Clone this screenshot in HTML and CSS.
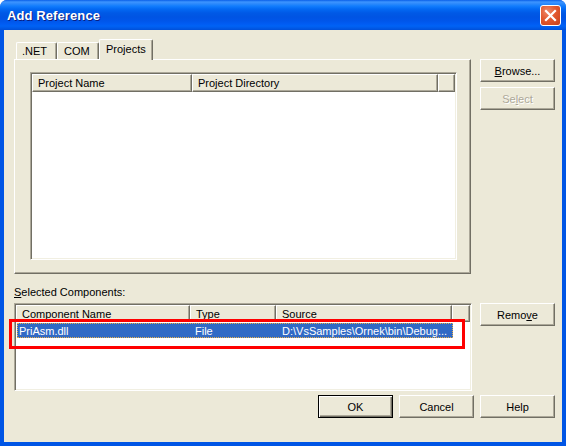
FILE: index.html
```html
<!DOCTYPE html>
<html>
<head>
<meta charset="utf-8">
<link rel="stylesheet" href="styles.css">
</head>
<body>
<div class="window">
  <div class="titlebar">
    <span class="title">Add Reference</span>
    <span class="close"><svg width="13" height="13" viewBox="0 0 13 13"><path d="M2 2 L11 11 M11 2 L2 11" stroke="#fff" stroke-width="2.2" stroke-linecap="square"/></svg></span>
  </div>
  <div class="client">
    <div class="toprow">
      <div class="tabarea">
        <div class="tabs">
          <div class="tab t-net">.NET</div>
          <div class="tab t-com">COM</div>
          <div class="tab t-proj active">Projects</div>
        </div>
        <div class="panel">
          <div class="listview big">
            <div class="header">
              <div class="hcell w-pname">Project Name</div>
              <div class="hcell w-pdir">Project Directory</div>
              <div class="hcell w-pfill"></div>
            </div>
          </div>
        </div>
      </div>
      <div class="sidebtns top">
        <button class="btn"><u>B</u>rowse...</button>
        <button class="btn disabled">Se<u>l</u>ect</button>
      </div>
    </div>
    <div class="label"><u>S</u>elected Components:</div>
    <div class="midrow">
      <div class="listview small">
        <div class="header">
          <div class="hcell w-cname">Component Name</div>
          <div class="hcell w-type">Type</div>
          <div class="hcell w-src">Source</div>
          <div class="hcell w-sfill"></div>
        </div>
        <div class="row selected">
          <div class="cell c-name">PriAsm.dll</div>
          <div class="cell c-type">File</div>
          <div class="cell c-src">D:\VsSamples\Ornek\bin\Debug...</div>
        </div>
      </div>
      <div class="sidebtns">
        <button class="btn">Remo<u>v</u>e</button>
      </div>
    </div>
    <div class="bottomrow">
      <button class="btn default">OK</button>
      <button class="btn">Cancel</button>
      <button class="btn">Help</button>
    </div>
    <div class="annotation"></div>
  </div>
</div>
</body>
</html>
```

FILE: styles.css
```css
html, body {
  margin: 0;
  padding: 0;
  background: #ffffff;
}

body {
  font-family: "Liberation Sans", Arial, sans-serif;
  font-size: 11px;
  color: #000;
}

.window {
  width: 566px;
  height: 446px;
  box-sizing: border-box;
  display: flex;
  flex-direction: column;
  border-radius: 7px 7px 0 0;
  overflow: hidden;
  background: #0055e5;
}

.titlebar {
  height: 30px;
  flex: none;
  display: flex;
  align-items: center;
  justify-content: space-between;
  padding: 0 5px 0 7px;
  background: linear-gradient(to bottom,
    #0a5fe8 0px, #3d95ff 2px, #2a88fb 4px, #127dfd 6px, #0369f3 9px,
    #0059e6 13px, #0054e3 17px, #0056ea 21px, #005cf3 24px,
    #0063f5 26px, #005ae9 28px, #004fd8 30px);
}

.title {
  color: #fff;
  font-family: "Liberation Sans", Arial, sans-serif;
  font-weight: bold;
  font-size: 13px;
  text-shadow: 1px 1px 0 #0a1e80;
  letter-spacing: 0.1px;
}

.close {
  width: 21px;
  height: 21px;
  box-sizing: border-box;
  border: 1px solid #fff;
  border-radius: 3px;
  background: radial-gradient(circle at 35% 30%, #ef8a6a 0%, #e2592f 45%, #c8401a 100%);
  display: flex;
  align-items: center;
  justify-content: center;
  margin-top: 1px;
}

.client {
  position: relative;
  flex: 1;
  margin: 0 4px 4px 4px;
  background: #ece9d8;
  padding: 9px 7px 0 10px;
  display: flex;
  flex-direction: column;
  border-left: 0;
}

.toprow {
  display: flex;
  gap: 9px;
}

.tabarea {
  width: 457px;
  display: flex;
  flex-direction: column;
}

.tabs {
  height: 20px;
  display: flex;
  align-items: flex-end;
  padding-left: 2px;
  position: relative;
  z-index: 1;
}

.tab {
  box-sizing: border-box;
  height: 17px;
  border-top: 1px solid #fff;
  border-left: 1px solid #fff;
  border-right: 1px solid #716f64;
  box-shadow: inset -1px 0 0 #aca899;
  border-radius: 2px 2px 0 0;
  background: #ece9d8;
  display: flex;
  align-items: center;
  padding-left: 5px;
  margin-bottom: 0;
}

.t-net { width: 41px; }
.t-com { width: 42px; padding-left: 6px; }
.t-proj { width: 54px; padding-left: 6px; }

.tab.active {
  height: 21px;
  margin-bottom: -1px;
  padding-bottom: 3px;
}

.panel {
  height: 215px;
  box-sizing: border-box;
  border-top: 1px solid #fff;
  border-left: 1px solid #fff;
  border-right: 1px solid #716f64;
  border-bottom: 1px solid #716f64;
  box-shadow: inset -1px -1px 0 #aca899;
  padding: 12px 0 0 15px;
}

.listview {
  background: #fff;
  box-sizing: border-box;
  border-top: 1px solid #aca899;
  border-left: 1px solid #aca899;
  border-right: 1px solid #fff;
  border-bottom: 1px solid #fff;
  box-shadow: inset 1px 1px 0 #716f64, inset -1px -1px 0 #f1efe2;
  padding: 1px;
}

.listview.big {
  width: 427px;
  height: 188px;
}

.listview.small {
  width: 458px;
  height: 88px;
}

.header {
  display: flex;
  height: 18px;
}

.small .header {
  height: 17px;
}

.hcell {
  box-sizing: border-box;
  height: 100%;
  background: #ece9d8;
  border-top: 1px solid #fff;
  border-left: 1px solid #fff;
  border-right: 1px solid #716f64;
  border-bottom: 1px solid #716f64;
  box-shadow: inset -1px -1px 0 #aca899;
  padding-left: 5px;
  display: flex;
  align-items: center;
  white-space: nowrap;
}

.w-pname { width: 160px; }
.w-pdir { width: 246px; }
.w-pfill { width: 17px; }

.w-cname { width: 174px; }
.w-type { width: 86px; }
.w-src { width: 176px; }
.w-sfill { width: 18px; }

.row {
  display: flex;
  height: 15px;
  margin-top: 1px;
  width: 436px;
  margin-left: 1px;
  box-sizing: border-box;
}

.row.selected {
  background: #316ac5;
  color: #fff;
  outline: 1px dotted #e8b04a;
  outline-offset: -1px;
}

.cell {
  display: flex;
  align-items: center;
  white-space: nowrap;
  overflow: hidden;
}

.c-name { width: 173px; padding-left: 2px; box-sizing: border-box; }
.c-type { width: 86px; padding-left: 5px; box-sizing: border-box; }
.c-src { width: 176px; padding-left: 6px; box-sizing: border-box; }

.sidebtns {
  display: flex;
  flex-direction: column;
  gap: 5px;
}

.sidebtns.top {
  margin-top: 20px;
}

.btn {
  width: 75px;
  height: 23px;
  box-sizing: border-box;
  font-family: "Liberation Sans", Arial, sans-serif;
  font-size: 11px;
  color: #000;
  background: #ece9d8;
  border-top: 1px solid #fff;
  border-left: 1px solid #fff;
  border-right: 1px solid #716f64;
  border-bottom: 1px solid #716f64;
  box-shadow: inset -1px -1px 0 #aca899;
  padding: 0;
  margin: 0;
}

.btn.default {
  border: 1px solid #000;
  box-shadow: inset 1px 1px 0 #fff, inset -1px -1px 0 #716f64, inset -2px -2px 0 #aca899;
}

.btn.disabled {
  color: #aca899;
  text-shadow: 1px 1px 0 #fff;
}

.btn u {
  text-underline-offset: 1px;
}

.label {
  margin-top: 12px;
  height: 13px;
  line-height: 13px;
  margin-left: 0;
}

.midrow {
  margin-top: 4px;
  display: flex;
  gap: 8px;
}

.bottomrow {
  margin-top: 4px;
  display: flex;
  justify-content: flex-end;
  gap: 6px;
}

.annotation {
  position: absolute;
  left: 5px;
  top: 289px;
  width: 456px;
  height: 30px;
  box-sizing: border-box;
  border: 3px solid #ff0000;
}
```
